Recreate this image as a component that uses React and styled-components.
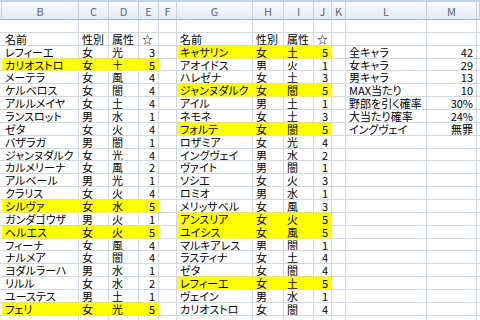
import styled, { createGlobalStyle } from "styled-components";

const GlobalStyle = createGlobalStyle`
  html, body {
    margin: 0;
    padding: 0;
    background: #ffffff;
    overflow: hidden;
  }
`;

const colWidths = [2, 77, 30, 30, 20, 18, 76, 31, 30, 18, 14, 81, 50, 3];
const colLetters = ["", "B", "C", "D", "E", "F", "G", "H", "I", "J", "K", "L", "M", ""];

const leftTable = [
  ["レフィーエ", "女", "光", 3],
  ["カリオストロ", "女", "土", 5],
  ["メーテラ", "女", "風", 4],
  ["ケルベロス", "女", "闇", 4],
  ["アルルメイヤ", "女", "土", 4],
  ["ランスロット", "男", "水", 1],
  ["ゼタ", "女", "火", 4],
  ["バザラガ", "男", "闇", 1],
  ["ジャンヌダルク", "女", "光", 4],
  ["カルメリーナ", "女", "風", 2],
  ["アルベール", "男", "光", 1],
  ["クラリス", "女", "火", 4],
  ["シルヴァ", "女", "水", 5],
  ["ガンダゴウザ", "男", "火", 1],
  ["ヘルエス", "女", "火", 5],
  ["フィーナ", "女", "風", 4],
  ["ナルメア", "女", "闇", 4],
  ["ヨダルラーハ", "男", "水", 1],
  ["リルル", "女", "水", 2],
  ["ユーステス", "男", "土", 1],
  ["フェリ", "女", "光", 5],
];

const rightTable = [
  ["キャサリン", "女", "土", 5],
  ["アオイドス", "男", "火", 1],
  ["ハレゼナ", "女", "土", 3],
  ["ジャンヌダルク", "女", "闇", 5],
  ["アイル", "男", "土", 1],
  ["ネモネ", "女", "土", 3],
  ["フォルテ", "女", "闇", 5],
  ["ロザミア", "女", "光", 4],
  ["イングヴェイ", "男", "水", 2],
  ["ヴァイト", "男", "闇", 1],
  ["ソシエ", "女", "火", 3],
  ["ロミオ", "男", "水", 1],
  ["メリッサベル", "女", "風", 3],
  ["アンスリア", "女", "火", 5],
  ["ユイシス", "女", "風", 5],
  ["マルキアレス", "男", "闇", 1],
  ["ラスティナ", "女", "土", 4],
  ["ゼタ", "女", "闇", 4],
  ["レフィーエ", "女", "土", 5],
  ["ヴェイン", "男", "水", 1],
  ["カリオストロ", "女", "闇", 4],
];

const stats = [
  ["全キャラ", "42"],
  ["女キャラ", "29"],
  ["男キャラ", "13"],
  ["MAX当たり", "10"],
  ["野郎を引く確率", "30%"],
  ["大当たり確率", "24%"],
  ["イングヴェイ", "無罪"],
];

function tableCells(row, header) {
  if (header) {
    return [
      { text: "名前" },
      { text: "性別" },
      { text: "属性" },
      { text: "☆" },
    ];
  }
  if (!row) return [{}, {}, {}, {}];
  const fill = row[3] === 5;
  return [
    { text: row[0], fill },
    { text: row[1], fill },
    { text: row[2], fill },
    { text: String(row[3]), fill, right: true },
  ];
}

function buildRows() {
  const rows = [];
  // blank row
  rows.push(colWidths.map(() => ({})));
  for (let r = 0; r < 23; r++) {
    const header = r === 0;
    const left = tableCells(leftTable[r - 1], header);
    const right = tableCells(rightTable[r - 1], header);
    const stat = r >= 1 ? stats[r - 1] : null;
    rows.push([
      {},
      ...left,
      {},
      ...right,
      {},
      stat ? { text: stat[0] } : {},
      stat ? { text: stat[1], right: true } : {},
      {},
    ]);
  }
  return rows;
}

function App() {
  const rows = buildRows();
  return (
    <>
      <GlobalStyle />
      <Window>
        <TopStrip />
        <Sheet>
          {colLetters.map((letter, i) => (
            <ColHeader key={"h" + i}>{letter}</ColHeader>
          ))}
          {rows.map((row, r) =>
            row.map((cell, c) => (
              <Cell key={r + "-" + c} $fill={cell.fill} $right={cell.right}>
                {cell.text}
              </Cell>
            ))
          )}
        </Sheet>
      </Window>
    </>
  );
}

const Window = styled.div`
  width: 480px;
  height: 320px;
  overflow: hidden;
  display: flex;
  flex-direction: column;
  font-family: "Noto Sans CJK JP", "Liberation Sans", sans-serif;
`;

const TopStrip = styled.div`
  height: 2px;
  flex: none;
  background: #c3d4ea;
`;

const Sheet = styled.div`
  display: grid;
  grid-template-columns: ${colWidths.map((w) => w + "px").join(" ")};
  grid-template-rows: 18px;
  grid-auto-rows: 12.86px;
`;

const ColHeader = styled.div`
  box-sizing: border-box;
  display: flex;
  align-items: center;
  justify-content: center;
  background: linear-gradient(#f8fafd, #e4eaf3);
  border-right: 1px solid #c5d1e0;
  border-bottom: 1px solid #9eb6ce;
  color: #5a6a82;
  font-size: 11px;
  overflow: hidden;
`;

const Cell = styled.div`
  box-sizing: border-box;
  display: flex;
  align-items: center;
  justify-content: ${(p) => (p.$right ? "flex-end" : "flex-start")};
  padding: 0 ${(p) => (p.$right ? "3px" : "0")} 0 ${(p) => (p.$right ? "0" : "3px")};
  background: ${(p) => (p.$fill ? "#ffff00" : "#ffffff")};
  border-right: 1px solid ${(p) => (p.$fill ? "#ffff00" : "#d0d7e5")};
  border-bottom: 1px solid ${(p) => (p.$fill ? "#ffff00" : "#d0d7e5")};
  color: #000000;
  font-size: 11px;
  line-height: 12px;
  font-feature-settings: "palt";
  white-space: nowrap;
  overflow: hidden;
`;

export default App;
